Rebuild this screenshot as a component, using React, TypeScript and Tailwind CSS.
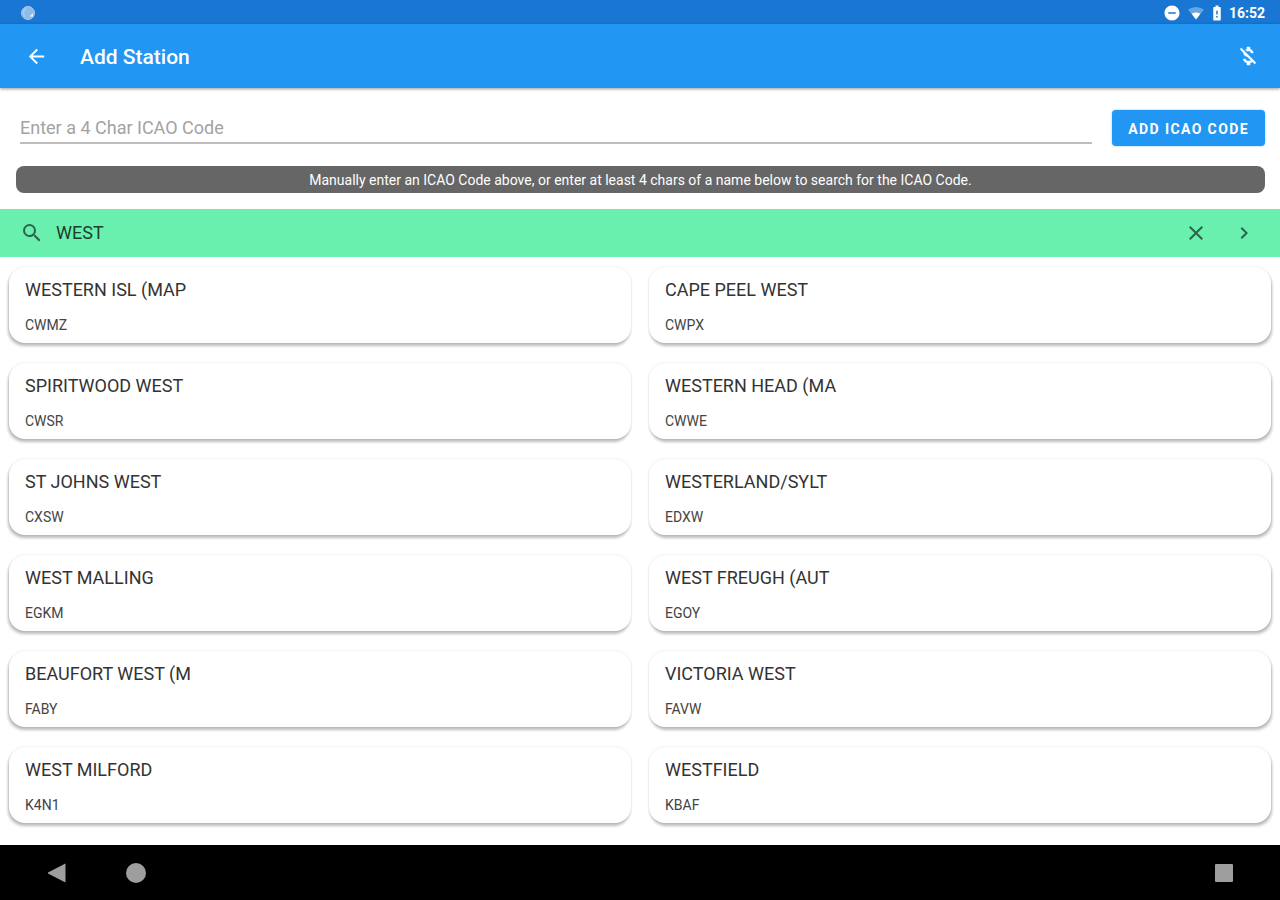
import React, { useState } from 'react';
import {
  MdArrowBack,
  MdBatteryAlert,
  MdChevronRight,
  MdClose,
  MdDoNotDisturbOn,
  MdSearch,
} from 'react-icons/md';

interface Station {
  name: string;
  code: string;
}

const stations: Station[] = [
  { name: 'WESTERN ISL (MAP', code: 'CWMZ' },
  { name: 'CAPE PEEL WEST', code: 'CWPX' },
  { name: 'SPIRITWOOD WEST', code: 'CWSR' },
  { name: 'WESTERN HEAD (MA', code: 'CWWE' },
  { name: 'ST JOHNS WEST', code: 'CXSW' },
  { name: 'WESTERLAND/SYLT', code: 'EDXW' },
  { name: 'WEST MALLING', code: 'EGKM' },
  { name: 'WEST FREUGH (AUT', code: 'EGOY' },
  { name: 'BEAUFORT WEST (M', code: 'FABY' },
  { name: 'VICTORIA WEST', code: 'FAVW' },
  { name: 'WEST MILFORD', code: 'K4N1' },
  { name: 'WESTFIELD', code: 'KBAF' },
];

const StatusBar: React.FC = () => (
  <div className="flex h-6 items-center justify-between bg-[#1976d2] pl-5 pr-[15px] pt-[2px] text-white">
    <svg className="h-4 w-4" viewBox="0 0 16 16" aria-hidden="true">
      <circle cx="8" cy="8" r="6.5" fill="#8fbbe9" />
      <circle cx="8" cy="8" r="6.5" fill="none" stroke="#a9cbef" strokeWidth="1" />
      <path d="M6 3.5a5 5 0 0 0-1 8" fill="none" stroke="#a9cbef" strokeWidth="1.5" />
      <path d="M9.5 11.5l3.500-3.500v3.500z" fill="#e3effb" />
    </svg>
    <div className="flex items-center">
      <MdDoNotDisturbOn className="h-[18px] w-[18px]" />
      <svg className="ml-[6px] h-4 w-[18px]" viewBox="0 0 18 16" aria-hidden="true">
        <path d="M1 4.500Q9-.5 17 4.500L9 14.500z" fill="#fff" fillOpacity=".35" />
        <path d="M4.600 8.800Q9 6 13.400 8.800L9 14.500z" fill="#fff" />
      </svg>
      <MdBatteryAlert className="ml-[3px] h-[18px] w-[18px]" />
      <span className="ml-[3px] text-sm font-bold">16:52</span>
    </div>
  </div>
);

const MoneyOffIcon: React.FC = () => (
  <svg
    className="h-6 w-6"
    viewBox="0 0 24 24"
    fill="currentColor"
    stroke="currentColor"
    strokeWidth="0.5"
    aria-hidden="true"
  >
    <path d="M12.5 6.9c1.78 0 2.44.85 2.5 2.1h2.21c-.07-1.72-1.12-3.3-3.21-3.81V3h-3v2.16c-.53.12-1.03.3-1.48.54l1.47 1.47c.41-.17.91-.27 1.51-.27zM5.33 4.06 4.06 5.33 7.5 8.77c0 2.08 1.56 3.21 3.91 3.91l3.51 3.51c-.34.48-1.05.91-2.42.91-2.06 0-2.87-.92-2.98-2.1h-2.2c.12 2.19 1.76 3.42 3.68 3.83V21h3v-2.15c.96-.18 1.82-.55 2.45-1.12l2.22 2.22 1.27-1.27L5.33 4.06z" />
  </svg>
);

const StationCard: React.FC<Station> = ({ name, code }) => (
  <li className="rounded-2xl bg-white px-4 pb-2 pt-[13px] shadow-[-1px_3px_3px_rgba(0,0,0,0.26),0_0_2px_rgba(0,0,0,0.14)] even:shadow-[1px_3px_3px_rgba(0,0,0,0.26),0_0_2px_rgba(0,0,0,0.14)]">
    <h2 className="text-lg leading-5 text-[#333]">{name}</h2>
    <p className="mt-[15px] text-sm leading-5 text-[#444]">{code}</p>
  </li>
);

const App: React.FC = () => {
  const [icao, setIcao] = useState('');
  const [query, setQuery] = useState('WEST');

  return (
    <div className="flex min-h-screen flex-col bg-white font-[Roboto,sans-serif]">
      <StatusBar />

      <header className="relative flex h-16 items-center bg-[#2196f3] pl-[25px] pr-5 text-white shadow-[0_1px_3px_rgba(0,0,0,0.4)]">
        <button type="button" aria-label="Back">
          <MdArrowBack className="h-[23px] w-[23px]" />
        </button>
        <h1 className="ml-8 pt-1 text-[21px] font-medium">Add Station</h1>
        <button type="button" aria-label="Remove ads" className="ml-auto">
          <MoneyOffIcon />
        </button>
      </header>

      <main className="flex flex-1 flex-col">
        <form
          className="flex items-center gap-5 pl-5 pr-[15px] pt-[22px]"
          onSubmit={(e) => e.preventDefault()}
        >
          <input
            type="text"
            aria-label="ICAO code"
            placeholder="Enter a 4 Char ICAO Code"
            maxLength={4}
            value={icao}
            onChange={(e) => setIcao(e.target.value)}
            className="h-8 min-w-0 flex-1 border-b-2 border-[#bdbdbd] text-lg text-[#333] outline-none placeholder:text-[#a3a3a3]"
          />
          <button
            type="submit"
            className="h-9 rounded-[4px] bg-[#2196f3] px-4 pt-[2px] text-sm font-bold tracking-widest text-white shadow-[0_0_2px_rgba(33,150,243,0.6)]"
          >
            ADD ICAO CODE
          </button>
        </form>

        <p className="ml-4 mr-[15px] mt-5 rounded-lg bg-[#666] pt-px text-center text-sm leading-[26px] text-white">
          Manually enter an ICAO Code above, or enter at least 4 chars of a name below to search for the ICAO Code.
        </p>

        <div className="mt-4 flex h-12 items-center bg-[#69f0ae] pl-5 pr-6 text-[#2c6549]">
          <MdSearch className="h-6 w-6" />
          <input
            type="text"
            aria-label="Search stations"
            value={query}
            onChange={(e) => setQuery(e.target.value)}
            className="ml-3 min-w-0 flex-1 text-lg text-[#1d3f2e] outline-none"
          />
          <button type="button" aria-label="Clear" onClick={() => setQuery('')}>
            <MdClose className="h-6 w-6" />
          </button>
          <button type="button" aria-label="Search" className="ml-6">
            <MdChevronRight className="h-6 w-6" />
          </button>
        </div>

        <ul className="grid grid-cols-2 gap-x-[18px] gap-y-5 px-[9px] pb-4 pt-[10px]">
          {stations.map((station) => (
            <StationCard key={station.code} {...station} />
          ))}
        </ul>
      </main>

      <nav className="flex h-[55px] items-center bg-black pl-12 pr-[47px] text-[#9e9e9e]">
        <button type="button" aria-label="Back">
          <svg className="h-5 w-5" viewBox="0 0 20 20" fill="currentColor">
            <path d="M17.500 .5v19L0 10.500v-1z" />
          </svg>
        </button>
        <button type="button" aria-label="Home" className="ml-[58px]">
          <svg className="h-5 w-5" viewBox="0 0 20 20" fill="currentColor">
            <circle cx="10" cy="10" r="10" />
          </svg>
        </button>
        <button type="button" aria-label="Recent apps" className="ml-auto">
          <svg className="h-[18px] w-[18px]" viewBox="0 0 18 18" fill="currentColor">
            <rect width="18" height="18" rx="1" />
          </svg>
        </button>
      </nav>
    </div>
  );
};

export default App;
